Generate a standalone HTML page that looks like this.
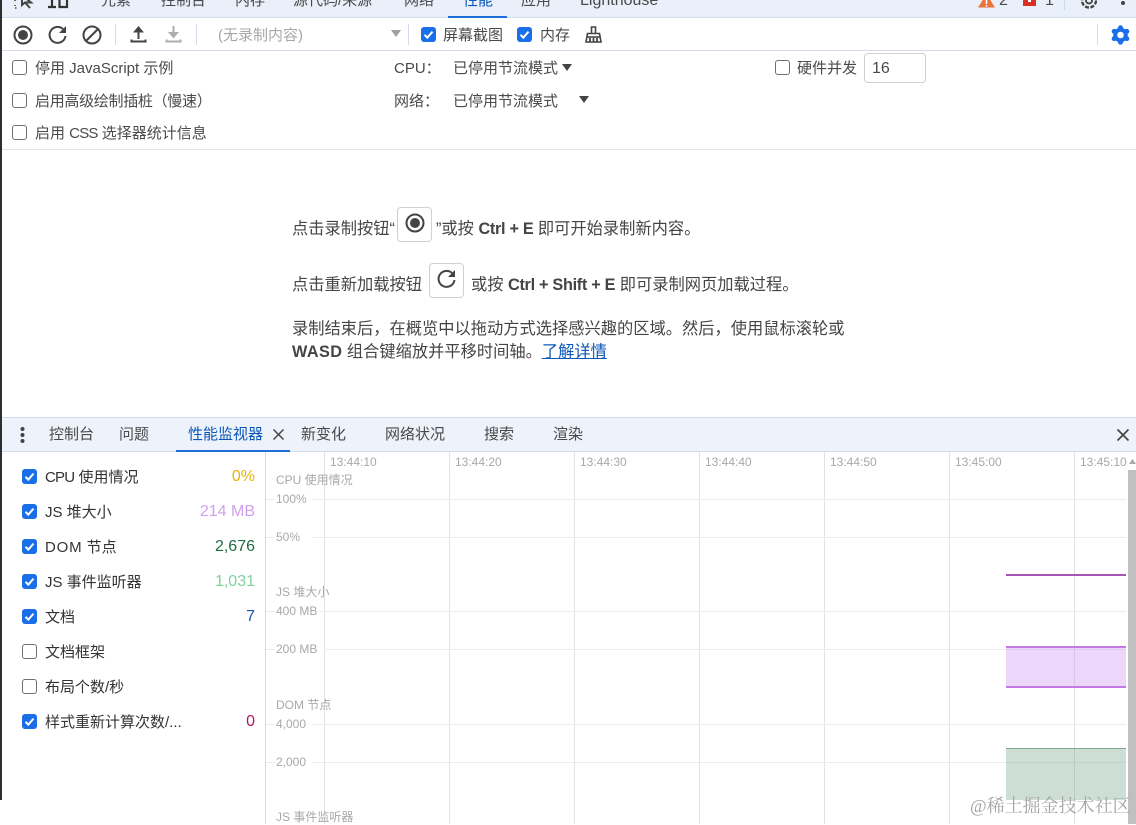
<!DOCTYPE html>
<html lang="zh"><head><meta charset="utf-8"><title>DevTools 性能</title>
<style>
*{box-sizing:border-box}
html,body{margin:0;padding:0;background:#fff}
body{width:1136px;height:824px;overflow:hidden;position:relative;font-family:"Liberation Sans","Noto Sans CJK SC",sans-serif;font-size:15px;color:#4a4a4a}
.a{position:absolute;white-space:nowrap;line-height:20px}
.l{font-size:16.250px;color:#454545}
.l b{letter-spacing:-.3px}
.bar{position:absolute;background:#e9f0fa}
.line{position:absolute;background:#d3dcec}
.cb{position:absolute;width:15px;height:15px;border:1.5px solid #6f6f6f;border-radius:3px;background:#fff}
.cb.on{background:#1a6fe8;border:none}
.cb.on svg{position:absolute;left:0;top:0}
.g{position:absolute;background:#ececec}
.gv{position:absolute;background:#e2e2e2;top:452px;width:1px;height:372px}
.lb{position:absolute;white-space:nowrap;font-size:12px;line-height:16px;color:#a8a8a8}
.m{position:absolute;left:45px;white-space:nowrap;line-height:20px;color:#333}
.v{position:absolute;right:881px;white-space:nowrap;line-height:20px;font-size:16px}
.n{letter-spacing:-.8px}
.w{letter-spacing:.8px}
b{font-weight:700;color:#444}
svg{position:absolute;overflow:visible}
</style></head><body>

<!-- top tab bar -->
<div class="bar" style="left:0;top:0;width:1136px;height:18px"></div>
<div class="line" style="left:0;top:17px;width:1136px;height:1px"></div>
<div style="position:absolute;left:448px;top:16px;width:59px;height:2px;background:#1a6fd8"></div>
<svg style="left:12px;top:-8px" width="24" height="18" fill="none" stroke="#444" stroke-width="2"><path d="M10 3L10 13L13 10.500L18 16M10 3L19 10.500L13 10.500"/><path d="M3 3h2M3 8v1M3 13v1M3 16h3" stroke-width="1.600" stroke-dasharray="1.500 1.500"/></svg>
<svg style="left:46px;top:-7px" width="24" height="16" fill="none" stroke="#333" stroke-width="2.200"><path d="M2 14h8M6 2v12M13.500 2h7.500v12h-7.500z"/></svg>
<div class="a" style="left:101px;top:-9px">元素</div>
<div class="a" style="left:161px;top:-9px">控制台</div>
<div class="a" style="left:235px;top:-9px">内存</div>
<div class="a" style="left:293px;top:-9px">源代码/来源</div>
<div class="a" style="left:404px;top:-9px">网络</div>
<div class="a" style="left:463px;top:-9px;color:#0b57b8">性能</div>
<div class="a" style="left:521px;top:-9px">应用</div>
<div class="a" style="left:580px;top:-9px;font-size:16px">Lighthouse</div>
<svg style="left:978px;top:-6px" width="17" height="14"><path d="M8.500 0L17 13.500H0z" fill="#e8743b"/><rect x="7.700" y="5" width="1.600" height="5" fill="#fff"/><rect x="7.700" y="11" width="1.600" height="1.600" fill="#fff"/></svg>
<div class="a" style="left:999px;top:-9px;font-size:16px">2</div>
<svg style="left:1023px;top:-6px" width="14" height="13"><path d="M0 0h13v12H0z" fill="#d93025"/><rect x="5" y="2" width="3" height="6" fill="#fff"/></svg>
<div class="a" style="left:1045px;top:-9px;font-size:16px">1</div>
<div style="position:absolute;left:1064px;top:0;width:1px;height:10px;background:#cfd8e8"></div>
<svg style="left:1079px;top:-9px" width="20" height="20" fill="none" stroke="#444" stroke-width="1.900"><circle cx="10" cy="9.500" r="3"/><circle cx="10" cy="9.500" r="7" stroke-dasharray="4 1.500" stroke-width="2.400"/></svg>
<svg style="left:1120px;top:-3px" width="7" height="12" fill="#444"><circle cx="3" cy="1" r="2"/><circle cx="3" cy="6" r="2"/></svg>

<!-- toolbar -->
<svg style="left:13px;top:25px" width="20" height="20"><circle cx="10" cy="10" r="8.500" fill="none" stroke="#444" stroke-width="2"/><circle cx="10" cy="10" r="5" fill="#444"/></svg>
<svg style="left:48px;top:25px" width="20" height="20" fill="none" stroke="#444" stroke-width="2"><path d="M17.500 11A8 8 0 1 1 15 4"/><path d="M18 1v7h-7z" fill="#444" stroke="none"/></svg>
<svg style="left:82px;top:25px" width="20" height="20" fill="none" stroke="#444" stroke-width="2"><circle cx="10" cy="10" r="8.500"/><path d="M4 16L16 4"/></svg>
<div class="line" style="left:115px;top:24px;width:1px;height:21px"></div>
<svg style="left:130px;top:26px" width="18" height="18" fill="none" stroke="#444" stroke-width="2"><path d="M8.500 13V3"/><path d="M8.500 0L14 6.500H3z" fill="#444" stroke="none"/><path d="M1.500 13.500v2h14v-2"/></svg>
<svg style="left:165px;top:26px" width="18" height="18" fill="none" stroke="#aeaeae" stroke-width="2"><path d="M8.500 0v9"/><path d="M8.500 12.500L14 6H3z" fill="#aeaeae" stroke="none"/><path d="M1.500 13.500v2h14v-2"/></svg>
<div class="line" style="left:196px;top:24px;width:1px;height:21px"></div>
<div class="a" style="left:218px;top:26px;color:#a8a8a8">(无录制内容)</div>
<svg style="left:391px;top:30px" width="10" height="7"><path d="M0 0h10L5 7z" fill="#a0a0a0"/></svg>
<div class="line" style="left:408px;top:24px;width:1px;height:21px"></div>
<div class="cb on" style="left:421px;top:27px"><svg width="15" height="15" fill="none" stroke="#fff" stroke-width="2"><path d="M3.500 7.800l2.800 2.800 5.200-6"/></svg></div>
<div class="a" style="left:443px;top:26px">屏幕截图</div>
<div class="cb on" style="left:517px;top:27px"><svg width="15" height="15" fill="none" stroke="#fff" stroke-width="2"><path d="M3.500 7.800l2.800 2.800 5.200-6"/></svg></div>
<div class="a" style="left:540px;top:26px">内存</div>
<svg style="left:585px;top:26px" width="17" height="18" fill="none" stroke="#444" stroke-width="1.600"><path d="M6.500 7V1h4v6"/><path d="M2.500 7.500h12l1.500 8.500H1z"/><path d="M1.500 11h14"/><path d="M5 12v4M8.500 12v4M12 12v4" stroke-width="1.800"/></svg>
<div class="line" style="left:1097px;top:24px;width:1px;height:21px"></div>
<svg style="left:1111px;top:25px" width="19" height="20"><circle cx="9.500" cy="10" r="5.300" fill="none" stroke="#1a6fe8" stroke-width="4"/><g fill="#1a6fe8"><circle cx="9.500" cy="2.800" r="2.500"/><circle cx="9.500" cy="17.200" r="2.500"/><circle cx="3.200" cy="6.400" r="2.500"/><circle cx="15.800" cy="6.400" r="2.500"/><circle cx="3.200" cy="13.600" r="2.500"/><circle cx="15.800" cy="13.600" r="2.500"/></g></svg>
<div class="line" style="left:0;top:50px;width:1136px;height:1px"></div>

<!-- settings -->
<div class="cb" style="left:12px;top:60px"></div>
<div class="a" style="left:35px;top:59px">停用 JavaScript 示例</div>
<div class="cb" style="left:12px;top:93px"></div>
<div class="a" style="left:35px;top:92px;letter-spacing:-.3px">启用高级绘制插桩（慢速）</div>
<div class="cb" style="left:12px;top:125px"></div>
<div class="a" style="left:35px;top:124px">启用 <span class="n">CSS</span> 选择器统计信息</div>
<div class="a" style="left:394px;top:59px">CPU：</div>
<div class="a" style="left:453px;top:59px">已停用节流模式</div>
<svg style="left:562px;top:64px" width="10" height="7"><path d="M0 0h10L5 7z" fill="#444"/></svg>
<div class="a" style="left:394px;top:92px">网络：</div>
<div class="a" style="left:453px;top:92px">已停用节流模式</div>
<svg style="left:579px;top:96px" width="10" height="7"><path d="M0 0h10L5 7z" fill="#444"/></svg>
<div class="cb" style="left:775px;top:60px"></div>
<div class="a" style="left:797px;top:59px">硬件并发</div>
<div style="position:absolute;left:864px;top:53px;width:62px;height:30px;border:1px solid #d0d0d0;border-radius:4px"></div>
<div class="a" style="left:872px;top:59px;font-size:16px">16</div>
<div class="line" style="left:0;top:149px;width:1136px;height:1px;background:#dfe4ee"></div>

<!-- landing -->
<div class="a l" style="left:292px;top:219px">点击录制按钮“</div>
<div style="position:absolute;left:397px;top:207px;width:35px;height:35px;border:1px solid #d0d0d0;border-radius:4px"></div>
<svg style="left:405px;top:213px" width="20" height="20"><circle cx="10" cy="10" r="8.500" fill="none" stroke="#444" stroke-width="2"/><circle cx="10" cy="10" r="5" fill="#444"/></svg>
<div class="a l" style="left:436px;top:219px">”或按 <b>Ctrl + E</b> 即可开始录制新内容。</div>
<div class="a l" style="left:292px;top:275px">点击重新加载按钮</div>
<div style="position:absolute;left:429px;top:263px;width:35px;height:35px;border:1px solid #d0d0d0;border-radius:4px"></div>
<svg style="left:437px;top:269px" width="20" height="20" fill="none" stroke="#444" stroke-width="2"><path d="M17.500 11A8 8 0 1 1 15 4"/><path d="M18 1v7h-7z" fill="#444" stroke="none"/></svg>
<div class="a l" style="left:471px;top:275px">或按 <b>Ctrl + Shift + E</b> 即可录制网页加载过程。</div>
<div class="a l" style="left:292px;top:319px">录制结束后，在概览中以拖动方式选择感兴趣的区域。然后，使用鼠标滚轮或</div>
<div class="a l" style="left:292px;top:342px"><b style="letter-spacing:.4px">WASD</b> 组合键缩放并平移时间轴。<span style="color:#0b57b8;text-decoration:underline">了解详情</span></div>

<!-- drawer tabs -->
<div class="bar" style="left:0;top:418px;width:1136px;height:34px;background:#edf2fb"></div>
<div class="line" style="left:0;top:417px;width:1136px;height:1px"></div>
<div class="line" style="left:0;top:451px;width:1136px;height:1px"></div>
<div style="position:absolute;left:176px;top:450px;width:114px;height:2px;background:#1a6fd8"></div>
<svg style="left:20px;top:427px" width="5" height="16" fill="#444"><circle cx="2.500" cy="2" r="2"/><circle cx="2.500" cy="8" r="2"/><circle cx="2.500" cy="14" r="2"/></svg>
<div class="a" style="left:49px;top:425px">控制台</div>
<div class="a" style="left:119px;top:425px">问题</div>
<div class="a" style="left:188px;top:425px;color:#0b57b8">性能监视器</div>
<svg style="left:273px;top:429px" width="11" height="11" stroke="#444" stroke-width="1.500"><path d="M.5.5l10 10M10.500.5l-10 10"/></svg>
<div class="a" style="left:301px;top:425px">新变化</div>
<div class="a" style="left:385px;top:425px">网络状况</div>
<div class="a" style="left:484px;top:425px">搜索</div>
<div class="a" style="left:553px;top:425px">渲染</div>
<svg style="left:1117px;top:429px" width="12" height="12" stroke="#444" stroke-width="1.700"><path d="M.5.5l11 11M11.500.5l-11 11"/></svg>

<!-- sidebar -->
<div class="line" style="left:265px;top:452px;width:1px;height:372px"></div>
<div class="cb on" style="left:22px;top:469px"><svg width="15" height="15" fill="none" stroke="#fff" stroke-width="2"><path d="M3.500 7.800l2.800 2.800 5.200-6"/></svg></div>
<div class="m" style="top:468px"><span class="n">CPU</span> 使用情况</div><div class="v" style="top:467px;color:#eab308">0%</div>
<div class="cb on" style="left:22px;top:504px"><svg width="15" height="15" fill="none" stroke="#fff" stroke-width="2"><path d="M3.500 7.800l2.800 2.800 5.200-6"/></svg></div>
<div class="m" style="top:503px">JS 堆大小</div><div class="v" style="top:502px;color:#cfa0ee">214 MB</div>
<div class="cb on" style="left:22px;top:539px"><svg width="15" height="15" fill="none" stroke="#fff" stroke-width="2"><path d="M3.500 7.800l2.800 2.800 5.200-6"/></svg></div>
<div class="m" style="top:538px"><span class="w">DOM</span> 节点</div><div class="v" style="top:537px;color:#1f6b42">2,676</div>
<div class="cb on" style="left:22px;top:574px"><svg width="15" height="15" fill="none" stroke="#fff" stroke-width="2"><path d="M3.500 7.800l2.800 2.800 5.200-6"/></svg></div>
<div class="m" style="top:573px">JS 事件监听器</div><div class="v" style="top:572px;color:#7ed29b">1,031</div>
<div class="cb on" style="left:22px;top:609px"><svg width="15" height="15" fill="none" stroke="#fff" stroke-width="2"><path d="M3.500 7.800l2.800 2.800 5.200-6"/></svg></div>
<div class="m" style="top:608px">文档</div><div class="v" style="top:607px;color:#1a56b0">7</div>
<div class="cb" style="left:22px;top:644px"></div>
<div class="m" style="top:643px">文档框架</div>
<div class="cb" style="left:22px;top:679px"></div>
<div class="m" style="top:678px">布局个数/秒</div>
<div class="cb on" style="left:22px;top:714px"><svg width="15" height="15" fill="none" stroke="#fff" stroke-width="2"><path d="M3.500 7.800l2.800 2.800 5.200-6"/></svg></div>
<div class="m" style="top:713px">样式重新计算次数/...</div><div class="v" style="top:712px;color:#b0185f">0</div>

<!-- chart grid -->
<div class="gv" style="left:324px"></div>
<div class="gv" style="left:449px"></div>
<div class="gv" style="left:574px"></div>
<div class="gv" style="left:699px"></div>
<div class="gv" style="left:824px"></div>
<div class="gv" style="left:949px"></div>
<div class="gv" style="left:1074px"></div>
<div class="g" style="left:266px;top:499px;width:860px;height:1px"></div>
<div class="g" style="left:266px;top:537px;width:860px;height:1px"></div>
<div class="g" style="left:266px;top:611px;width:860px;height:1px"></div>
<div class="g" style="left:266px;top:649px;width:860px;height:1px"></div>
<div class="g" style="left:266px;top:724px;width:860px;height:1px"></div>
<div class="g" style="left:266px;top:762px;width:860px;height:1px"></div>
<div style="position:absolute;left:275px;top:492px;width:37px;height:14px;background:#fff"></div>
<div style="position:absolute;left:275px;top:530px;width:37px;height:14px;background:#fff"></div>
<div style="position:absolute;left:275px;top:604px;width:45px;height:14px;background:#fff"></div>
<div style="position:absolute;left:275px;top:642px;width:49px;height:14px;background:#fff"></div>
<div style="position:absolute;left:275px;top:717px;width:37px;height:14px;background:#fff"></div>
<div style="position:absolute;left:275px;top:755px;width:37px;height:14px;background:#fff"></div>
<div class="lb" style="left:330px;top:454px">13:44:10</div>
<div class="lb" style="left:455px;top:454px">13:44:20</div>
<div class="lb" style="left:580px;top:454px">13:44:30</div>
<div class="lb" style="left:705px;top:454px">13:44:40</div>
<div class="lb" style="left:830px;top:454px">13:44:50</div>
<div class="lb" style="left:955px;top:454px">13:45:00</div>
<div class="lb" style="left:1080px;top:454px">13:45:10</div>
<div class="lb" style="left:276px;top:472px">CPU 使用情况</div>
<div class="lb" style="left:276px;top:491px">100%</div>
<div class="lb" style="left:276px;top:529px">50%</div>
<div class="lb" style="left:276px;top:584px">JS 堆大小</div>
<div class="lb" style="left:276px;top:603px">400 MB</div>
<div class="lb" style="left:276px;top:641px">200 MB</div>
<div class="lb" style="left:276px;top:697px">DOM 节点</div>
<div class="lb" style="left:276px;top:716px">4,000</div>
<div class="lb" style="left:276px;top:754px">2,000</div>
<div class="lb" style="left:276px;top:809px">JS 事件监听器</div>

<!-- chart data -->
<div style="position:absolute;left:1006px;top:574px;width:120px;height:2px;background:#a855b8"></div>
<div style="position:absolute;left:1006px;top:646px;width:120px;height:42px;background:rgba(200,140,240,.35);border-top:2px solid #c27ae0;border-bottom:2px solid #c27ae0"></div>
<div style="position:absolute;left:1006px;top:748px;width:120px;height:52px;background:rgba(90,150,115,.3);border-top:1px solid #7fa890"></div>

<!-- scrollbar -->
<div style="position:absolute;left:1128px;top:470px;width:8px;height:354px;background:#c0c0c0"></div>
<svg style="left:1129px;top:459px" width="7" height="5"><path d="M0 5h7L3.500 0z" fill="#a8a8a8"/></svg>

<!-- watermark -->
<div class="a" style="left:970px;top:796px;font-size:18px;color:#a5a5a5;font-family:'Liberation Serif','Noto Serif CJK SC',serif">@稀土掘金技术社区</div>

<!-- left dark edge -->
<div style="position:absolute;left:0;top:0;width:2px;height:800px;background:#2e2e2e"></div>
</body></html>
